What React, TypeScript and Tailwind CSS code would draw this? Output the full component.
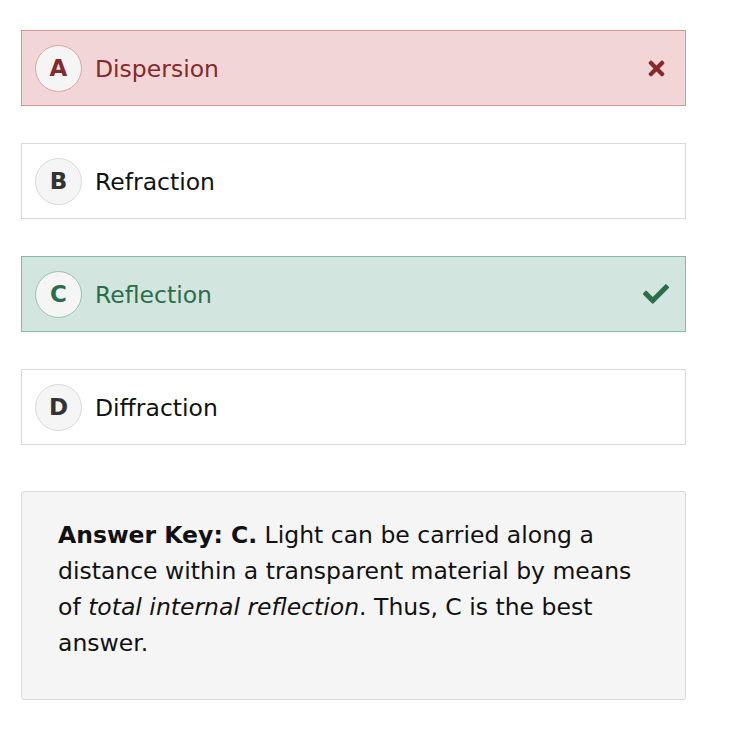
import { FaTimes, FaCheck } from "react-icons/fa";

type State = "wrong" | "right" | "none";

const options: { letter: string; label: string; state: State }[] = [
  { letter: "A", label: "Dispersion", state: "wrong" },
  { letter: "B", label: "Refraction", state: "none" },
  { letter: "C", label: "Reflection", state: "right" },
  { letter: "D", label: "Diffraction", state: "none" },
];

function Option({ letter, label, state }: { letter: string; label: string; state: State }) {
  const box =
    state === "wrong"
      ? "bg-[#f2d5d7] border-[#de9397] text-[#86292a]"
      : state === "right"
        ? "bg-[#d3e5df] border-[#84bca3] text-[#2c6e4b]"
        : "bg-white border-[#d9d9d9] text-[#111]";
  const circle =
    state === "wrong"
      ? "border-[#e0a3a6] text-[#86292a]"
      : state === "right"
        ? "border-[#94c4ae] text-[#2c6e4b]"
        : "border-[#d9d9d9] text-[#333]";

  return (
    <div className={`flex items-center h-[76px] border pl-[13px] pr-[16px] ${box}`}>
      <div
        className={`w-[47px] h-[47px] rounded-full border bg-[#f5f5f5] flex items-center justify-center font-bold text-[23px] ${circle}`}
      >
        {letter}
      </div>
      <span className="ml-[13px] pt-[4px] text-[23.5px] flex-1">{label}</span>
      {state === "wrong" && <FaTimes className="text-[#86292a] w-[23px] h-[23px] mr-[1px]" />}
      {state === "right" && <FaCheck className="text-[#2c6e4b] w-[26px] h-[26px]" />}
    </div>
  );
}

export default function App() {
  return (
    <div
      className="bg-white min-h-[754px] pt-[30px] pl-[21px] w-[686px]"
      style={{ fontFamily: '"DejaVu Sans", Verdana, sans-serif' }}
    >
      <div className="flex flex-col gap-[37px]">
        {options.map((o) => (
          <Option key={o.letter} {...o} />
        ))}
      </div>
      <div className="mt-[46px] bg-[#f5f5f5] border border-[#d9d9d9] rounded-[3px] pl-[36px] pr-[26px] pt-[25px] h-[209px] text-[23.5px] leading-[36px] text-[#111]">
        <p>
          <b>Answer Key: C.</b> Light can be carried along a distance within a transparent material by means of{" "}
          <i>total internal reflection</i>. Thus, C is the best answer.
        </p>
      </div>
    </div>
  );
}
